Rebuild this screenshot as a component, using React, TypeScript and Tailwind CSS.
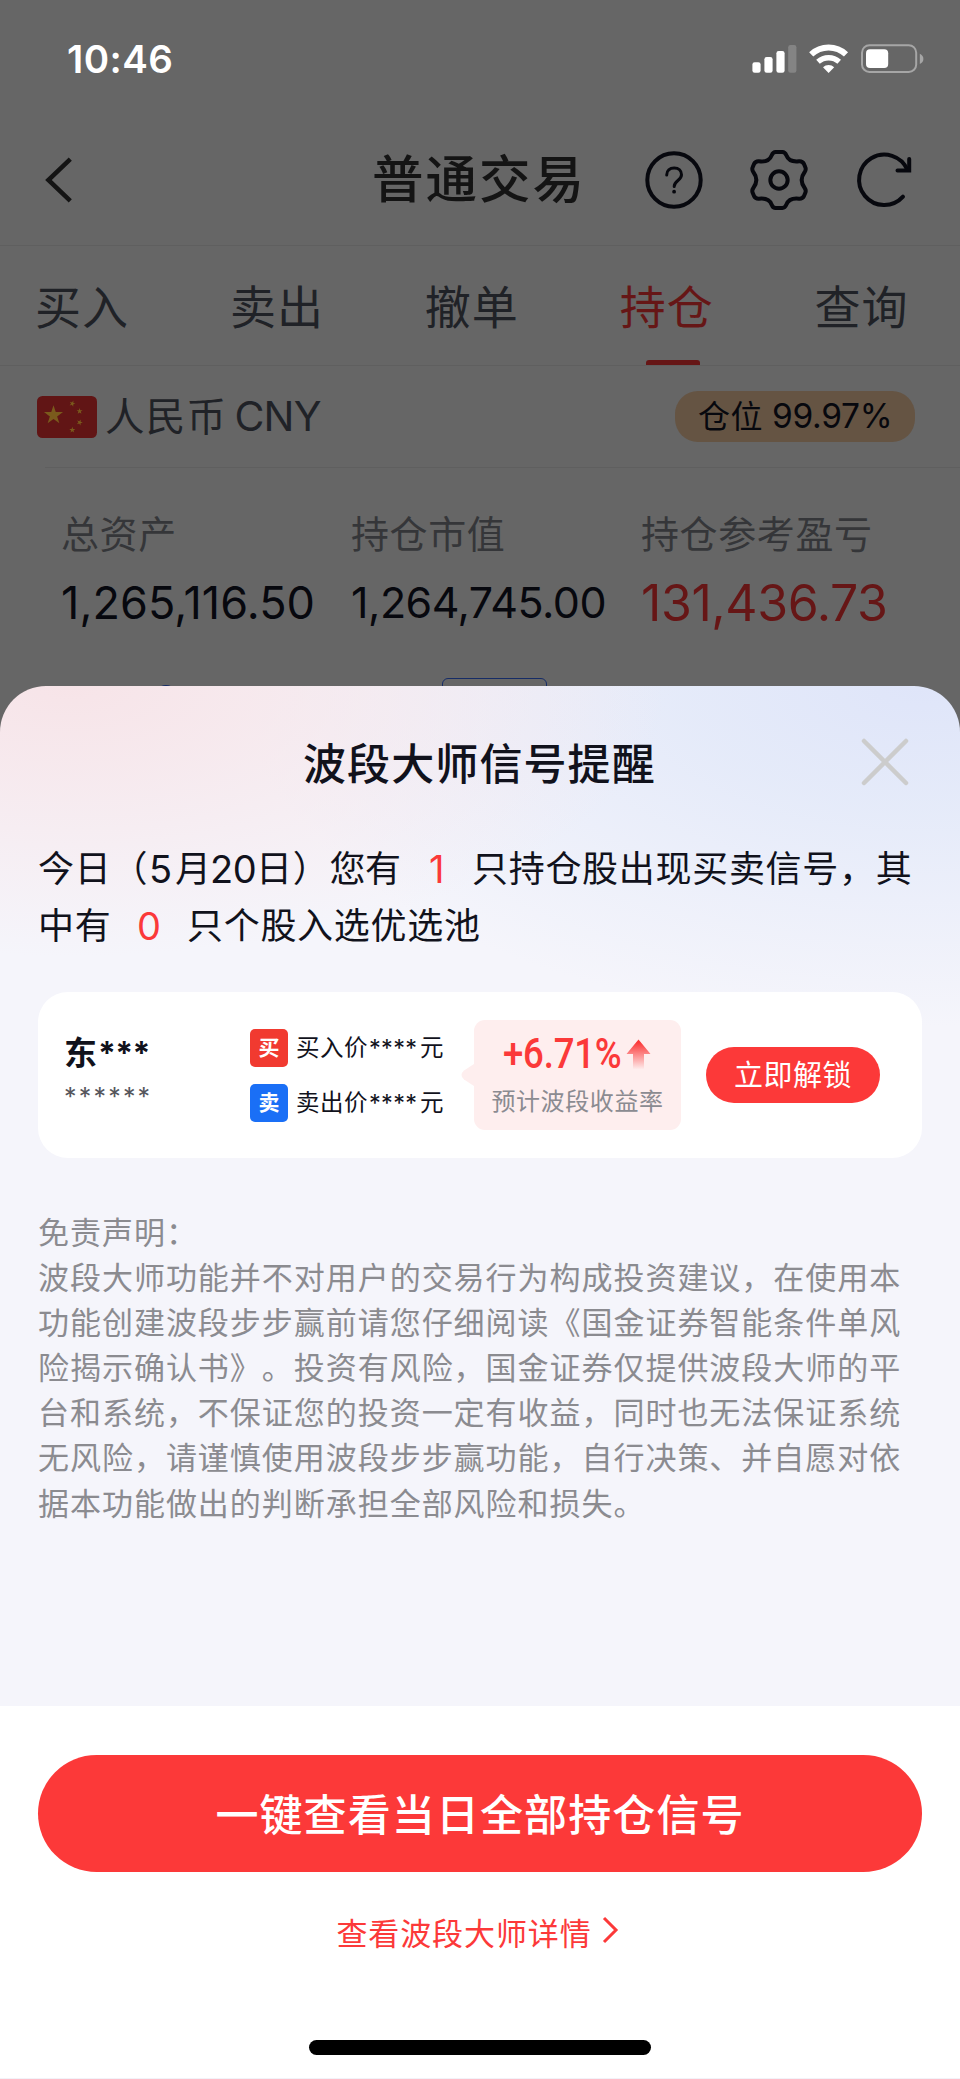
import React from "react";

const tabs = ["买入", "卖出", "撤单", "持仓", "查询"];

const disclaimer = [
  "免责声明：",
  "波段大师功能并不对用户的交易行为构成投资建议，在使用本",
  "功能创建波段步步赢前请您仔细阅读《国金证券智能条件单风",
  "险揭示确认书》。投资有风险，国金证券仅提供波段大师的平",
  "台和系统，不保证您的投资一定有收益，同时也无法保证系统",
  "无风险，请谨慎使用波段步步赢功能，自行决策、并自愿对依",
  "据本功能做出的判断承担全部风险和损失。",
];

function StatusIcons() {
  return (
    <svg width="176" height="34" viewBox="750 42 176 34" className="shrink-0">
      <g fill="#fff">
        <rect x="752.4" y="62.3" width="8.2" height="10.5" rx="2.3" />
        <rect x="764.4" y="57" width="8.2" height="15.8" rx="2.3" />
        <rect x="776.4" y="51" width="8.2" height="21.8" rx="2.3" />
        <rect x="788.2" y="45" width="8.2" height="27.8" rx="2.3" opacity="0.2" />
      </g>
      <g fill="none" stroke="#fff">
        <path d="M811.2 54.4A25.5 25.5 0 0 1 846 54.4" strokeWidth="6" />
        <path d="M818 61.7A16 16 0 0 1 839.2 61.7" strokeWidth="5.4" />
      </g>
      <path d="M828.6 73 L823 67.2 A8.2 8.2 0 0 1 834.2 67.2 Z" fill="#fff" />
      <rect x="862" y="45.2" width="54.2" height="26.8" rx="7.5" fill="none" stroke="#a6a6a6" strokeWidth="2" />
      <rect x="866" y="49.3" width="22.2" height="18.8" rx="4" fill="#fff" />
      <path d="M919.8 53.8 Q923.4 55.6 923.4 58.9 Q923.4 62.2 919.8 64 Z" fill="#a6a6a6" />
    </svg>
  );
}

function HelpIcon() {
  return (
    <svg width="60" height="60" viewBox="-30 -30 60 60" fill="none" stroke="#07080e" strokeLinecap="round">
      <circle r="26.7" strokeWidth="4" />
      <path d="M-7.3 -5C-7.3 -9.5 -4.3 -12 0.2 -12S7.5 -9.2 7.5 -5.2C7.5 0.5 0.2 0.5 0.2 6.5" strokeWidth="3" />
      <circle cx="0.1" cy="11.7" r="1.9" fill="#07080e" stroke="none" />
    </svg>
  );
}

function GearIcon() {
  return (
    <svg width="60" height="62" viewBox="-90 -93 180 186" fill="none" stroke="#07080e" strokeWidth="12">
      <path d="M-10 -84H10Q18 -84 22 -74C28 -58 42 -54 60 -56Q70 -57 75 -48L79 -38Q82 -31 77 -24C65 -8 65 8 77 24Q82 31 79 38L75 48Q70 57 60 56C42 54 28 58 22 74Q18 84 10 84H-10Q-18 84 -22 74C-28 58 -42 54 -60 56Q-70 57 -75 48L-79 38Q-82 31 -77 24C-65 8 -65 -8 -77 -24Q-82 -31 -79 -38L-75 -48Q-70 -57 -60 -56C-42 -54 -28 -58 -22 -74Q-18 -84 -10 -84Z" />
      <circle r="26" />
    </svg>
  );
}

function RefreshIcon() {
  return (
    <svg width="60" height="60" viewBox="-30 -30 60 60" fill="none" stroke="#07080e" strokeWidth="4" strokeLinecap="round">
      <path d="M19 16.7A25.2 25.2 0 1 1 23.5 -10" />
      <path d="M13.5 -9.5H25.2V-21" strokeLinejoin="miter" />
    </svg>
  );
}

const STAR = "M0 -1L0.225 -0.309H0.951L0.363 0.118L0.588 0.809L0 0.382L-0.588 0.809L-0.363 0.118L-0.951 -0.309H-0.225Z";

function Flag() {
  const small = [
    [35.3, 7.6, 20],
    [42.6, 15.2, 0],
    [42.6, 26.4, 20],
    [35.3, 34, 0],
  ];
  return (
    <svg width="60" height="42" viewBox="0 0 60 42" className="shrink-0">
      <rect width="60" height="42" rx="5.5" fill="#611515" />
      <path d={STAR} transform="translate(16.5 19.2) scale(10)" fill="#7a5a1c" />
      {small.map(([x, y, r], i) => (
        <path key={i} d={STAR} transform={`translate(${x} ${y}) rotate(${r}) scale(3.2)`} fill="#7a5a1c" />
      ))}
    </svg>
  );
}

function PriceRow({ mark, color, label }: { mark: string; color: string; label: string }) {
  return (
    <div className="flex h-[38px] items-center">
      <div className={`flex h-[38px] w-[38px] items-center justify-center rounded-[5px] text-[21px] font-bold leading-none text-white ${color}`}>
        {mark}
      </div>
      <div className="ml-[8px] flex text-[23.5px] leading-[38px] text-[#11121c]">
        <span className="tracking-[0.5px]">{label}</span>
        <span className="ml-[1px] w-[51px] tracking-[0.3px]">****</span>
        <span>元</span>
      </div>
    </div>
  );
}

export default function App() {
  return (
    <div className="flex h-[2079px] w-[960px] flex-col overflow-hidden bg-[#666666] font-['Inter','Noto_Sans_CJK_SC',sans-serif] text-[#07080e] [text-spacing-trim:space-all]">
      <div className="flex h-[686px] shrink-0 flex-col overflow-hidden">
        <div className="flex h-[118px] shrink-0 items-center justify-between pl-[67px] pr-[34px]">
          <span className="text-[38.5px] font-semibold leading-none tracking-[0.4px] text-white">10:46</span>
          <StatusIcons />
        </div>
        <div className="flex h-[128px] shrink-0 items-center border-b border-[#5f5f5f] pb-[3px]">
          <svg width="34" height="50" viewBox="40 155 34 50" fill="none" stroke="#141414" strokeWidth="4.5" className="ml-[40px] shrink-0">
            <path d="M70.3 159.2L48.4 180L70.3 200.8" />
          </svg>
          <h1 className="ml-[298px] w-[272px] whitespace-nowrap text-[51.5px] font-medium leading-none tracking-[2px] text-[#141414]">普通交易</h1>
          <HelpIcon />
          <div className="ml-[45px]"><GearIcon /></div>
          <div className="ml-[45px]"><RefreshIcon /></div>
        </div>
        <div className="flex h-[120px] shrink-0 border-b border-[#5f5f5f] pl-[35px]">
          {tabs.map((t) => (
            <div key={t} className={`relative w-[194.9px] shrink-0 text-[46px] leading-[123px] tracking-[1px] ${t === "持仓" ? "text-[#661616]" : "text-[#202227]"}`}>
              {t}
              {t === "持仓" && <div className="absolute bottom-0 left-[26px] h-[5px] w-[54px] rounded-t-[3px] bg-[#661616]" />}
            </div>
          ))}
        </div>
        <div className="flex h-[101px] shrink-0 items-center pl-[37px] pr-[45px] text-[#202227]">
          <Flag />
          <span className="ml-[8px] pt-[2px] text-[39.5px] leading-none tracking-[1.3px]">人民币</span>
          <span className="ml-[7px] text-[41px] leading-none tracking-[-0.8px]">CNY</span>
          <div className="ml-auto flex h-[51px] w-[240px] items-center rounded-[23px] bg-[#655443] pl-[23px] text-[#07080e]">
            <span className="pt-[1px] text-[32px] leading-none tracking-[0.5px]">仓位</span>
            <span className="ml-[9px] text-[33.5px] leading-none tracking-[-0.3px]">99.97%</span>
          </div>
        </div>
        <div className="ml-[45px] h-px shrink-0 bg-[#5f5f5f]" />
        <div className="flex h-[210px] shrink-0 pl-[61px] pt-[42px]">
          <div className="w-[290px]">
            <div className="text-[38px] leading-[49px] tracking-[0.6px] text-[#353639]">总资产</div>
            <div className="mt-[22px] text-[45px] leading-[44px] tracking-[0.1px]">1,265,116.50</div>
          </div>
          <div className="w-[290px]">
            <div className="text-[38px] leading-[49px] tracking-[0.6px] text-[#353639]">持仓市值</div>
            <div className="mt-[21px] text-[43px] leading-[44px] tracking-[-0.5px]">1,264,745.00</div>
          </div>
          <div>
            <div className="text-[38px] leading-[49px] tracking-[0.6px] text-[#353639]">持仓参考盈亏</div>
            <div className="mt-[22px] text-[50px] leading-[44px] tracking-[-0.4px] text-[#661616]">131,436.73</div>
          </div>
        </div>
        <div className="flex h-[40px] shrink-0 pl-[155px]">
          <div className="mt-[7px] h-[22px] w-[22px] shrink-0 rounded-full border-2 border-[#162c66]" />
          <div className="ml-[265px] h-[40px] w-[105px] rounded-[6px] border border-[#162c66]" />
        </div>
      </div>

      <div className="flex h-[1020px] shrink-0 flex-col rounded-t-[46px] bg-[#f5f5fb] bg-[radial-gradient(600px_270px_at_70px_0px,#f7e4e8_0%,#f7e6eacc_30%,#f7e3e800_100%),radial-gradient(680px_340px_at_920px_0px,#dfe5f9_0%,#e1e8f9cc_35%,#e6ebfa00_100%)] text-[#11121c]">
        <div className="flex h-[154px] items-center">
          <h2 className="ml-[303px] w-[557px] pt-[2px] text-[43px] font-medium leading-none tracking-[1.1px]">波段大师信号提醒</h2>
          <svg width="50" height="50" viewBox="-25 -25 50 50" stroke="#cccccc" strokeWidth="4.5" strokeLinecap="round" className="mb-[2px]">
            <path d="M-21 -21L21 21M21 -21L-21 21" />
          </svg>
        </div>
        <div className="flex h-[152px] flex-col whitespace-nowrap pl-[38px] pt-px text-[36px] leading-[57px] tracking-[0.7px]">
          <div className="flex">
            <span className="w-[111px]">今日（</span>
            <span className="w-[26px] text-[38px]">5</span>
            <span className="w-[35px]">月</span>
            <span className="w-[46px] text-[38px] tracking-[-0.5px]">20</span>
            <span className="w-[109px]">日）您</span>
            <span className="w-[64px]">有</span>
            <span className="w-[43px] text-[38px] text-[#fb3939]">1</span>
            <span>只持仓股出现买卖信号，其</span>
          </div>
          <div className="flex">
            <span className="w-[99px]">中有</span>
            <span className="w-[50px] text-[38px] text-[#fb3939]">0</span>
            <span>只个股入选优选池</span>
          </div>
        </div>
        <div className="mx-[38px] flex h-[166px] shrink-0 items-center rounded-[30px] bg-white">
          <div className="ml-[26px] w-[186px]">
            <div className="flex h-[40px] items-center">
              <span className="text-[33px] font-bold leading-none">东</span>
              <span className="ml-[1px] text-[32px] font-bold leading-none tracking-[-0.7px]">***</span>
            </div>
            <div className="pt-[3px] text-[25px] leading-[40px] tracking-[2.2px] text-[#55565c]">******</div>
          </div>
          <div className="flex flex-col gap-[17px]">
            <PriceRow mark="买" color="bg-[#f13a30]" label="买入价" />
            <PriceRow mark="卖" color="bg-[#1a6ff6]" label="卖出价" />
          </div>
          <svg width="13" height="26" viewBox="0 0 13 26" className="ml-auto">
            <path d="M13 2L3 8.5Q-2 13 3 17.5L13 24Z" fill="#feeeee" />
          </svg>
          <div className="flex h-[110px] w-[207px] flex-col items-center rounded-[11px] bg-[#feeeee]">
            <div className="mt-[13px] flex h-[42px] w-[150px] items-center">
              <span className="w-[123px] origin-left scale-x-[0.87] whitespace-nowrap font-['Roboto',sans-serif] text-[42px] font-medium leading-none tracking-[-0.2px] text-[#fb3939]">+6.71%</span>
              <svg width="25" height="31" viewBox="0 0 25 31" className="shrink-0">
                <defs>
                  <linearGradient id="rise" x1="0" y1="0" x2="0" y2="1">
                    <stop offset="0.1" stopColor="#fb3939" />
                    <stop offset="1" stopColor="#fb3939" stopOpacity="0" />
                  </linearGradient>
                </defs>
                <path d="M12.5 0.5L24.5 15H18V30.5H7V15H0.5Z" fill="url(#rise)" />
              </svg>
            </div>
            <div className="mt-[10px] text-[24px] leading-[34px] tracking-[0.6px] text-[#8b8b91]">预计波段收益率</div>
          </div>
          <button className="ml-[25px] mr-[42px] h-[56px] w-[174px] rounded-full bg-[#fc3939] text-[29px] leading-[58px] tracking-[0.5px] text-white">立即解锁</button>
        </div>
        <div className="mt-[52px] whitespace-nowrap pl-[38px] text-[31px] leading-[45.1px] tracking-[0.97px] text-[#8b8b90]">
          {disclaimer.map((line) => (
            <div key={line}>{line}</div>
          ))}
        </div>
      </div>

      <div className="flex h-[373px] shrink-0 flex-col items-center border-b border-[#f2f2f8] bg-white">
        <button className="mt-[49px] h-[117px] w-[884px] shrink-0 rounded-full bg-[#fc3939] text-[43px] font-medium leading-[120px] tracking-[1.1px] text-white">一键查看当日全部持仓信号</button>
        <div className="mr-[4px] mt-[41px] flex h-[40px] items-center text-[31px] leading-none tracking-[0.9px] text-[#fc3939]">
          查看波段大师详情
          <svg width="18" height="28" viewBox="0 0 18 28" fill="none" stroke="#fc3939" strokeWidth="3" className="mb-[6px] ml-[10px]">
            <path d="M2 2L14 14L2 26" />
          </svg>
        </div>
        <div className="mt-[87px] h-[15px] w-[342px] rounded-full bg-black" />
      </div>
    </div>
  );
}
